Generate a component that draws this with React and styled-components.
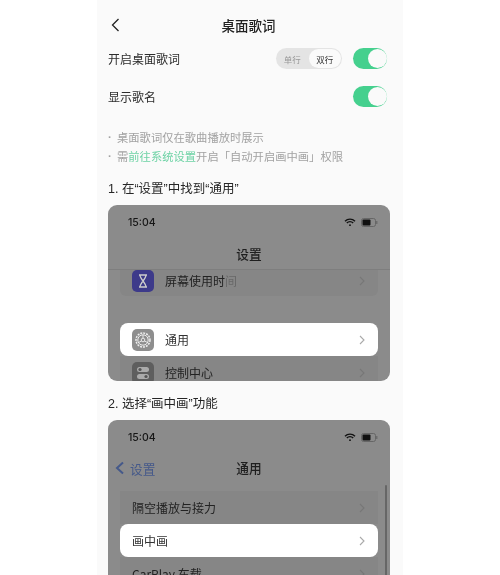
import React from "react";
import styled, { createGlobalStyle } from "styled-components";

const Global = createGlobalStyle`
  html, body { margin: 0; padding: 0; background: #fff; }
  body { font-family: "Noto Sans CJK SC", "Liberation Sans", sans-serif; color: #2a2a2a; }
`;
const Panel = styled.div`
  width: 306px; height: 575px; background: #fafafa; margin-left: 97px;
  overflow: hidden; padding: 0 16px 0 11px; box-sizing: border-box;
  filter: blur(0.35px);
`;
const Header = styled.div`
  height: 48px; display: flex; align-items: center; justify-content: center; position: relative;
`;
const Back = styled.svg`
  position: absolute; left: 2px; top: 17px; width: 12px; height: 16px;
`;
const Title = styled.div`font-size: 13.5px; font-weight: 500; color: #222; margin-top: 1px; margin-left: 2px;`;
const Row = styled.div`
  height: 21px; display: flex; align-items: center; gap: 11px; margin-bottom: ${p => p.$mb || 0}px;
`;
const RowLabel = styled.div`font-size: 12px; color: #2c2c2c; flex: 1;`;
const Segment = styled.div`
  width: 66px; height: 21px; border-radius: 11px; background: #e4e4e4; display: flex;
  box-sizing: border-box; padding: 1px 1px 1px 0; font-size: 8.5px;
`;
const SegItem = styled.div`
  flex: 1; display: flex; align-items: center; justify-content: center; border-radius: 10px;
  color: ${p => p.$on ? "#333" : "#999"}; background: ${p => p.$on ? "#fafafa" : "transparent"};
`;
const Toggle = styled.div`
  width: 34px; height: 21px; border-radius: 11px; background: #45d08e; position: relative; flex: none;
  &::after { content: ""; position: absolute; right: 0.5px; top: 1px; width: 19px; height: 19px;
    border-radius: 50%; background: #fafafa; }
`;
const Notes = styled.div`
  margin-top: 21px; font-size: 11.3px; line-height: 19px; color: #a2a2a2;
`;
const Note = styled.div`white-space: nowrap; display: flex;`;
const Dot = styled.span`width: 9px; flex: none; font-family: "Liberation Sans", sans-serif; font-weight: 700;`;
const Link = styled.span`color: #6fd3a6;`;
const Step = styled.div`
  font-family: "Liberation Sans", "Noto Sans CJK SC", sans-serif;
  font-size: 12.5px; color: #262626; line-height: 16px; white-space: nowrap;
  margin-top: ${p => p.$mt}px; margin-bottom: ${p => p.$mb}px;
`;
const Shot = styled.div`
  width: 282px; height: ${p => p.$h}px; background: #8b8b8b; border-radius: 9px; overflow: hidden;
  flex: none; position: relative; color: #1c1c1c;
`;
const Status = styled.div`
  display: flex; align-items: center; justify-content: space-between;
  padding: 9px 12px 0 20px; height: 16px; font-size: 10.5px; font-weight: 500;
  font-family: "Inter", "Liberation Sans", sans-serif; color: #161616;
`;
const StatusIcons = styled.div`display: flex; align-items: center; gap: 5px;`;
const NavBar = styled.div`
  height: ${p => p.$h}px; padding: ${p => p.$pad}px 0 ${p => p.$padb || 0}px;
  display: flex; align-items: center; justify-content: center;
  font-size: 12.7px; position: relative; font-weight: 500; color: #1f1f1f;
  border-bottom: ${p => p.$line ? "1px solid #7e7e7e" : "none"};
  box-sizing: border-box;
`;
const BackLink = styled.div`
  position: absolute; left: 7px; top: 50%; transform: translateY(-50%);
  display: flex; align-items: center; gap: 5px; color: #45598a; font-size: 12.7px; font-weight: 400;
`;
const ListRow = styled.div`
  height: 33px; margin: 0 12px; display: flex; align-items: center; gap: 11px;
  box-sizing: border-box; padding: 0 13px 0 12px; font-size: 12px;
  background: ${p => p.$hl ? "#fff" : "#868686"};
  border-radius: ${p => p.$hl ? "8px" : "0"};
  color: ${p => p.$hl ? "#333" : "#222"};
`;
const ClippedRow = styled(ListRow)`
  height: 26px; padding-bottom: 5px; border-radius: 0 0 6px 6px;
`;
const RowText = styled.div`flex: 1; white-space: nowrap; overflow: hidden;`;
const Faded = styled.span`opacity: 0.3;`;
const IconTile = styled.div`
  width: 22px; height: 22px; border-radius: 5px; flex: none; background: ${p => p.$bg};
  display: flex; align-items: center; justify-content: center;
`;
const Gap = styled.div`height: ${p => p.$h}px;`;
const Scroll = styled.div`
  position: absolute; right: 3px; top: 65px; bottom: 0; width: 2px; background: #666; border-radius: 1px;
`;

const Chevron = ({ c = "#777" }) => (
  <svg width="6" height="10" viewBox="0 0 6 10" fill="none"><path d="M1 1l4 4-4 4" stroke={c} strokeWidth="1.1" /></svg>
);
const Icons = () => (
  <StatusIcons>
    <svg width="12" height="9" viewBox="0 0 12 9" fill="none" stroke="#111" strokeWidth="1.4">
      <path d="M1 3.2a7 7 0 0 1 10 0M2.8 5a4.5 4.5 0 0 1 6.4 0" />
      <circle cx="6" cy="7.2" r="0.9" fill="#111" stroke="none" />
    </svg>
    <svg width="17" height="9" viewBox="0 0 17 9">
      <rect x="0.5" y="0.5" width="14" height="8" rx="2" fill="none" stroke="#666" />
      <rect x="1.5" y="1.5" width="8" height="6" rx="1" fill="#111" />
      <rect x="15.2" y="3" width="1.2" height="3" fill="#666" />
    </svg>
  </StatusIcons>
);

export default function App() {
  return (
    <Panel>
      <Global />
      <Header>
        <Back viewBox="0 0 12 16" fill="none">
          <path d="M8.5 2L2.5 8l6 6" stroke="#222" strokeWidth="1.3" />
        </Back>
        <Title>桌面歌词</Title>
      </Header>
      <Row $mb={17}>
        <RowLabel>开启桌面歌词</RowLabel>
        <Segment><SegItem>单行</SegItem><SegItem $on>双行</SegItem></Segment>
        <Toggle />
      </Row>
      <Row>
        <RowLabel>显示歌名</RowLabel>
        <Toggle />
      </Row>
      <Notes>
        <Note><Dot>·</Dot>桌面歌词仅在歌曲播放时展示</Note>
        <Note><Dot>·</Dot><span>需<Link>前往系统设置</Link>开启「自动开启画中画」权限</span></Note>
      </Notes>
      <Step $mt={15} $mb={8}>1. 在“设置”中找到“通用”</Step>
      <Shot $h={176}>
        <Status>15:04<Icons /></Status>
        <NavBar $h={40} $pad={8} $line>设置</NavBar>
        <ClippedRow>
          <IconTile $bg="#3d3a8a">
            <svg width="12" height="14" viewBox="0 0 12 14" fill="none" stroke="#ccc" strokeWidth="1.3"><path d="M2 1h8M2 13h8M3 1c0 4 6 8 6 12M9 1c0 4-6 8-6 12" /></svg>
          </IconTile>
          <RowText>屏幕使用时<Faded>间</Faded></RowText>
          <Chevron />
        </ClippedRow>
        <Gap $h={27} />
        <ListRow $hl>
          <IconTile $bg="#8e8e8e">
            <svg width="18" height="18" viewBox="0 0 18 18" fill="none" stroke="#eee"><circle cx="9" cy="9" r="7" strokeWidth="1.5" strokeDasharray="2 1" /><circle cx="9" cy="9" r="5.2" strokeWidth="1" /><circle cx="9" cy="9" r="1.8" strokeWidth="0.9" /><path d="M9 4v3.2M4.6 11.5l3-1.6M13.4 11.5l-3-1.6" strokeWidth="0.9" /></svg>
          </IconTile>
          <RowText>通用</RowText>
          <Chevron c="#aaa" />
        </ListRow>
        <ListRow>
          <IconTile $bg="#5e5e5e">
            <svg width="14" height="16" viewBox="0 0 14 16"><rect x="1" y="2" width="12" height="5" rx="2.5" fill="#aaa" /><rect x="1" y="9" width="12" height="5" rx="2.5" fill="#aaa" /><circle cx="4" cy="4.5" r="1.6" fill="#555" /><circle cx="10" cy="11.5" r="1.6" fill="#555" /></svg>
          </IconTile>
          <RowText>控制中心</RowText>
          <Chevron />
        </ListRow>
      </Shot>
      <Step $mt={15} $mb={8}>2. 选择“画中画”功能</Step>
      <Shot $h={176}>
        <Status>15:04<Icons /></Status>
        <NavBar $h={46} $pad={0} $padb={2}>
          <BackLink>
            <svg width="10" height="13" viewBox="0 0 10 13" fill="none"><path d="M8 1L2 6.5 8 12" stroke="#45598a" strokeWidth="2" /></svg>
            设置
          </BackLink>
          通用
        </NavBar>
        <ListRow><RowText>隔空播放与接力</RowText><Chevron /></ListRow>
        <ListRow $hl><RowText>画中画</RowText><Chevron c="#aaa" /></ListRow>
        <ListRow><RowText>CarPlay 车载</RowText><Chevron /></ListRow>
        <Scroll />
      </Shot>
    </Panel>
  );
}
